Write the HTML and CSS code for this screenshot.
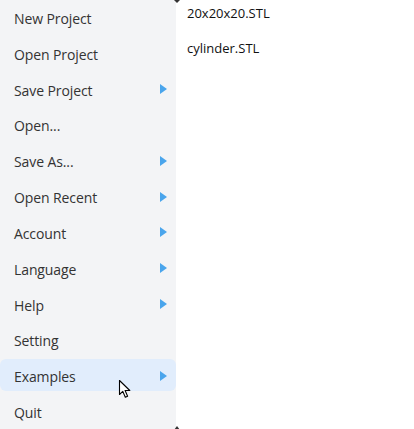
FILE: index.html
```html
<!DOCTYPE html>
<html>
<head>
<meta charset="utf-8">
<link rel="stylesheet" href="styles.css">
</head>
<body>
<div class="page">
  <div class="menu">
    <div class="item"><span>New Project</span></div>
    <div class="item"><span>Open Project</span></div>
    <div class="item sub"><span>Save Project</span><i class="arrow"></i></div>
    <div class="item"><span>Open...</span></div>
    <div class="item sub"><span>Save As...</span><i class="arrow"></i></div>
    <div class="item sub"><span>Open Recent</span><i class="arrow"></i></div>
    <div class="item sub"><span>Account</span><i class="arrow"></i></div>
    <div class="item sub"><span>Language</span><i class="arrow"></i></div>
    <div class="item sub"><span>Help</span><i class="arrow"></i></div>
    <div class="item"><span>Setting</span></div>
    <div class="item sub active"><span>Examples</span><i class="arrow"></i>
      <svg class="cursor" width="14" height="20" viewBox="0 0 14 20"><path d="M1.5 1.5 L1.5 15.5 L4.8 12.4 L7.3 18.2 L9.6 17.2 L7.1 11.5 L11.8 11.5 Z" fill="#fff" stroke="#000" stroke-width="1.1" stroke-linejoin="round"/></svg>
    </div>
    <div class="item"><span>Quit</span></div>
    <i class="scroll up"></i>
    <i class="scroll down"></i>
  </div>
  <div class="files">
    <div class="file">20x20x20.STL</div>
    <div class="file">cylinder.STL</div>
  </div>
</div>
</body>
</html>
```
FILE: styles.css
```css
html, body {
  margin: 0;
  padding: 0;
  background: #fff;
}
body {
  font-family: "Open Sans", "Noto Sans", sans-serif;
  width: 414px;
  height: 429px;
  overflow: hidden;
}
.page {
  display: flex;
  height: 429px;
}
.menu {
  position: relative;
  width: 176px;
  flex: none;
  background: #f3f4f6;
  display: flex;
  flex-direction: column;
  margin-top: -1px;
}
.item {
  position: relative;
  height: 32px;
  box-sizing: border-box;
  margin: 2px 0;
  padding: 3px 9px 0 14px;
  display: flex;
  align-items: center;
  justify-content: space-between;
  font-size: 14px;
  color: #333;
  border-radius: 6px;
}
.item span {
  letter-spacing: -0.1px;
}
.item.active {
  background: #e1edfc;
}
.arrow {
  width: 0;
  height: 0;
  margin-top: -2px;
  border-top: 5px solid transparent;
  border-bottom: 5px solid transparent;
  border-left: 7px solid #4aa5ec;
}
.cursor {
  position: absolute;
  left: 118px;
  top: 20px;
}
.scroll {
  position: absolute;
  right: -4px;
  width: 0;
  height: 0;
  border-left: 3px solid transparent;
  border-right: 3px solid transparent;
}
.scroll.up {
  top: 1px;
  border-top: 3px solid #333;
}
.scroll.down {
  bottom: -1px;
  border-bottom: 4px solid #333;
}
.files {
  padding: 3px 0 0 11px;
  display: flex;
  flex-direction: column;
  gap: 15px;
}
.file {
  font-size: 13px;
  line-height: 20px;
  color: #111;
}
```
